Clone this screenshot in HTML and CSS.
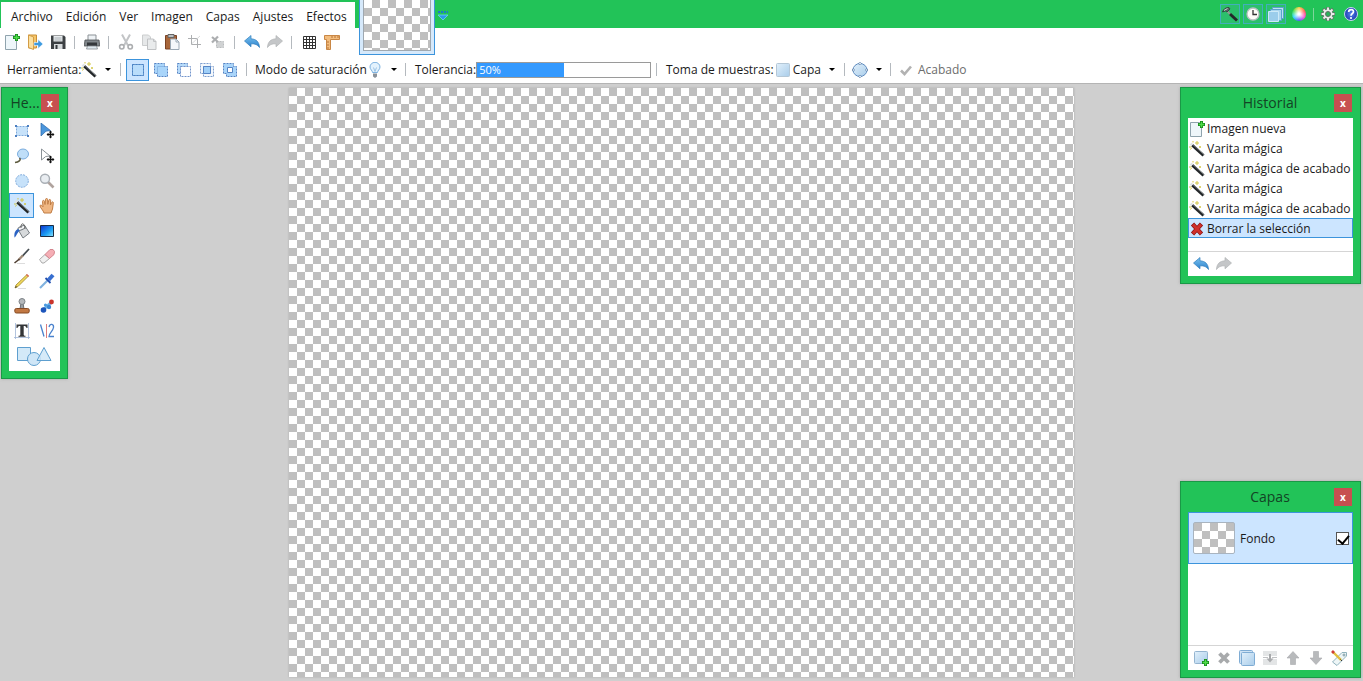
FILE: index.html
```html
<!DOCTYPE html>
<html lang="es">
<head>
<meta charset="utf-8">
<title>Editor de imágenes</title>
<link rel="stylesheet" href="styles.css">
</head>
<body>
<svg class="defs" aria-hidden="true">
  <defs>
    <linearGradient id="g-blue" x1="0" y1="0" x2="1" y2="1"><stop offset="0" stop-color="#e2f0fb"/><stop offset="1" stop-color="#a9cdea"/></linearGradient>
    <linearGradient id="g-arrow" x1="0" y1="0" x2="0" y2="1"><stop offset="0" stop-color="#7cc4f0"/><stop offset="1" stop-color="#2a80cc"/></linearGradient>
    <linearGradient id="g-fade" x1="0" y1="0" x2="1" y2="1"><stop offset="0" stop-color="#0b2fd0"/><stop offset=".6" stop-color="#1da0f4"/><stop offset="1" stop-color="#8fe6ff"/></linearGradient>
    <radialGradient id="g-help"><stop offset="0" stop-color="#5b86ee"/><stop offset="1" stop-color="#1b3bb0"/></radialGradient>
  </defs>
  <symbol id="new" viewBox="0 0 16 16"><path d="M1.500 1.500h9l2 3v11h-11z" fill="#eef6fa" stroke="#8fa3ad"/><path d="M12.500 0v7M9 3.500h7" stroke="#178a1c" stroke-width="3"/><path d="M12.500 .8v5.400M9.800 3.500h5.400" stroke="#4fdc4a" stroke-width="1.400"/></symbol>
  <symbol id="open" viewBox="0 0 16 16"><path d="M1.500 1h8v13h-8z" fill="#f5c66b" stroke="#c98f35"/><path d="M1.500 1l5 2v12.500l-5-2z" fill="#fbe0a0" stroke="#d39c45"/><path d="M7 8.500h4V5.500l5 4.500-5 4.500v-3H7z" fill="#3d9be0" stroke="#eef7ff" stroke-width=".6"/></symbol>
  <symbol id="save" viewBox="0 0 16 16"><path d="M1 1.500h13l1.500 1.500v12H1z" fill="#3c4043"/><path d="M3.500 2h9v5.500h-9z" fill="#e9edef"/><path d="M4.500 4h7M4.500 6h7" stroke="#a9b0b4"/><path d="M4 10h8.500v5H4z" fill="#d6dadc"/><path d="M5.500 11h2v4h-2z" fill="#33373a"/></symbol>
  <symbol id="print" viewBox="0 0 16 16"><path d="M4 1h8v6H4z" fill="#eef2f5" stroke="#8b9196"/><path d="M1 6h14l.8 6H.2z" fill="#80868a" stroke="#4c5053" stroke-width=".8"/><path d="M3 8.500h10V12H3z" fill="#34383b"/><path d="M3.500 12h9l1 3h-11z" fill="#dfe9ef" stroke="#858c90" stroke-width=".8"/></symbol>
  <symbol id="cut" viewBox="0 0 16 16"><path d="M4 .5l6 11M12 .5l-6 11" stroke="#c2c4c6" stroke-width="2" fill="none"/><circle cx="3.800" cy="12.800" r="2.200" fill="none" stroke="#acaeb0" stroke-width="1.600"/><circle cx="12.200" cy="12.800" r="2.200" fill="none" stroke="#acaeb0" stroke-width="1.600"/></symbol>
  <symbol id="copy" viewBox="0 0 16 16"><path d="M1.500 1h6l2 2v8.500h-8z" fill="#e6e8e9" stroke="#cbcdce"/><path d="M6.500 5h6l2.500 2.500v8H6.500z" fill="#e9ebec" stroke="#c0c2c4"/><path d="M12.500 5v2.500H15" fill="none" stroke="#c0c2c4"/></symbol>
  <symbol id="paste" viewBox="0 0 16 16"><path d="M1.500 1.500h11V15h-11z" fill="#a8663a" stroke="#7a4324"/><path d="M4 .5h6v3H4z" fill="#b9bdc0" stroke="#666"/><path d="M6.500 5h5.500l3 3v7.500H6.500z" fill="#f4f8fb" stroke="#9aa9b5"/><path d="M12 5v3h3" fill="none" stroke="#9aa9b5"/></symbol>
  <symbol id="crop" viewBox="0 0 16 16"><path d="M4.500 1v9.500H14M1 4.500h9.500V14" fill="none" stroke="#adafb1"/><path d="M5 9.500L13 2" stroke="#d8dadb"/></symbol>
  <symbol id="desel" viewBox="0 0 16 16"><path d="M6.500 7.500h7v6h-7z" fill="#d0d2d3" stroke="#b9bbbd" stroke-dasharray="2 1"/><path d="M2 3l6 5M8 2.500l-6 6" stroke="#acaeb0" stroke-width="2.200"/></symbol>
  <symbol id="undo" viewBox="0 0 16 16"><path d="M.5 7L7 1.500v3.300c5 .2 8.300 3 8.500 8.700-2-3-4.500-3.800-8.500-3.700v3z" fill="url(#g-arrow)" stroke="#2f7cbc" stroke-width=".7"/></symbol>
  <symbol id="redo" viewBox="0 0 16 16"><path d="M15.500 7L9 1.500v3.300C4 5 .7 7.800.5 13.500c2-3 4.500-3.800 8.500-3.700v3z" fill="#c4c6c8" stroke="#b0b3b5" stroke-width=".7"/></symbol>
  <symbol id="grid" viewBox="0 0 16 16"><path d="M2.500 2.500h12v12h-12zM5.500 2.500v12M8.500 2.500v12M11.500 2.500v12M2.500 5.500h12M2.500 8.500h12M2.500 11.500h12" fill="#fff" stroke="#333"/></symbol>
  <symbol id="ruler" viewBox="0 0 16 16"><path d="M.5 1.500h15v4h-9v10h-4V5.500h-2z" fill="#f3bd7d" stroke="#c98745"/><path d="M8 2v2M11 2v2M14 2v2M3 8h2M3 11h2M3 14h2" stroke="#b8753a"/></symbol>
  <symbol id="wand" viewBox="0 0 16 16"><path d="M3 4l11.500 10.500" stroke="#222628" stroke-width="3"/><path d="M3.600 3.300l11.500 10.500" stroke="#8c9296" stroke-width=".8"/><path d="M1.500 2.700l1.800 1.600" stroke="#dfe4e6" stroke-width="2.600"/><path d="M8 0v4M6 2h4M11 5v2M10 6h2M4 0v1.500M0 6h2.500M1.500 8.500l1-1.500" stroke="#d2c645"/></symbol>
  <symbol id="sel-replace" viewBox="0 0 16 16"><path d="M2.500 2.500h11v11h-11z" fill="#b9ddfb" stroke="#76a3d6"/><path d="M2.500 2.500h11v11h-11z" fill="none" stroke="#4a82c4" stroke-dasharray="2 1"/></symbol>
  <symbol id="sel-add" viewBox="0 0 16 16"><path d="M1.500 1.500h10v3h3v10h-10v-3h-3z" fill="#a9d5fa" stroke="#5684c4" stroke-dasharray="2 1"/><path d="M4.500 11V4.500H11" fill="none" stroke="#8ab8e6"/></symbol>
  <symbol id="sel-sub" viewBox="0 0 16 16"><path d="M1.500 1.500h10v3h-7v7h-3z" fill="#b5dafa" stroke="#5684c4" stroke-dasharray="2 1"/><path d="M4.500 4.500h10v10h-10z" fill="#fff" stroke="#7295cc" stroke-dasharray="2 1"/></symbol>
  <symbol id="sel-int" viewBox="0 0 16 16"><path d="M1.500 1.500h10v10h-10zM4.500 4.500h10v10h-10z" fill="#f4f8fc" stroke="#7f9fcf" stroke-dasharray="2 1"/><path d="M4.500 4.500h7v7h-7z" fill="#9fcff8" stroke="#5684c4"/></symbol>
  <symbol id="sel-xor" viewBox="0 0 16 16"><path d="M1.500 1.500h10v3h3v10h-10v-3h-3z" fill="#a9d5fa" stroke="#5684c4" stroke-dasharray="2 1"/><path d="M5.500 5.500h5v5h-5z" fill="#fff" stroke="#5684c4"/></symbol>
  <symbol id="bulb" viewBox="0 0 16 16"><path d="M5.500 10.500c0-2-2.500-3-2.500-5.500a5 4.700 0 0 1 10 0c0 2.500-2.500 3.500-2.500 5.500z" fill="#e3f2fd" stroke="#7db2e0"/><path d="M6.500 5.500l1.500 4 1.500-4" fill="none" stroke="#9cc3e5"/><path d="M6 11.500h4v3L8 16l-2-1.500z" fill="#8a9199"/></symbol>
  <symbol id="layer" viewBox="0 0 16 16"><rect x="1.500" y="1.500" width="13" height="13" rx="1" fill="url(#g-blue)" stroke="#b4c7d6"/></symbol>
  <symbol id="ellipse" viewBox="0 0 16 16"><ellipse cx="8" cy="8" rx="7" ry="6.500" fill="url(#g-blue)" stroke="#5f8cc0"/><path d="M8 .2l1.300 1.300L8 2.800 6.700 1.500zM8 13.200l1.300 1.300L8 15.800l-1.300-1.300zM1.300 6.700L2.600 8 1.300 9.300 0 8zM14.700 6.700L16 8l-1.300 1.300L13.400 8z" fill="#fff" stroke="#47709f" stroke-width=".7"/></symbol>
  <symbol id="check" viewBox="0 0 16 16"><path d="M3 8.500l3.500 3.500L13 4.500" fill="none" stroke="#b2b2b2" stroke-width="2.600"/></symbol>
  <symbol id="hammer" viewBox="0 0 16 16"><path d="M5 5l3.500 3.500" stroke="#8f9a90" stroke-width="2"/><path d="M8 8l7 6.500" stroke="#23282a" stroke-width="3"/><path d="M.5 6C1.500 3 3.500 1.500 7 1.500L8 3 5 6 3.500 5z" fill="#5b6568" stroke="#2b3133" stroke-width=".7"/><path d="M2 4.500L5.500 2.500" stroke="#ccd5d7"/></symbol>
  <symbol id="clock" viewBox="0 0 16 16"><circle cx="8" cy="8" r="6" fill="#fcfcf8" stroke="#b9bfc2" stroke-width="1.300"/><path d="M8 4v4.500h4" fill="none" stroke="#333" stroke-width="1.300"/></symbol>
  <symbol id="layers" viewBox="0 0 16 16"><path d="M4.500 1.500h11v11h-11z" fill="#bfe0f2" stroke="#5aa3cb"/><path d="M2.500 3.500h11v11h-11z" fill="#a9d5ee" stroke="#5aa3cb"/><path d="M.5 5.500h10v10H.5z" fill="#9bcdeb" stroke="#cdeaf8"/></symbol>
  <symbol id="gear" viewBox="0 0 16 16"><path d="M8 1v14M1 8h14M3 3l10 10M13 3L3 13" stroke="#666e68" stroke-width="3.400"/><path d="M8 1.600v12.800M1.600 8h12.800M3.500 3.500l9 9M12.500 3.500l-9 9" stroke="#e8ece9" stroke-width="2"/><circle cx="8" cy="8" r="4.500" fill="#e8ece9"/><circle cx="8" cy="8" r="2.500" fill="#27b35a" stroke="#666e68"/></symbol>
  <symbol id="help" viewBox="0 0 16 16"><circle cx="8" cy="8" r="6.500" fill="url(#g-help)" stroke="#c9d4f4"/><path d="M5.700 6c0-3.300 4.800-3 4.800-.3C10.500 7.500 8 7.600 8 9.700" fill="none" stroke="#fff" stroke-width="1.700"/><circle cx="8" cy="12" r="1.100" fill="#fff"/></symbol>
  <symbol id="rectsel" viewBox="0 0 16 16"><path d="M2.500 3.500h11v9h-11z" fill="#c7e2fa" stroke="#7fabdc" stroke-dasharray="2 1"/><path d="M1 2h2v2H1zM13 2h2v2h-2zM1 12h2v2H1zM13 12h2v2h-2z" fill="#4c7fc0"/></symbol>
  <symbol id="move" viewBox="0 0 16 16"><path d="M2 0l9.500 7.500-4.500.7L2 13z" fill="#4b96dc" stroke="#2d69a8" stroke-width=".7"/><path d="M11.500 8v7M8 11.500h7" stroke="#111" stroke-width="1.400"/><path d="M11.500 7.500l1.500 2h-3zM11.500 15.500l1.500-2h-3zM7.500 11.500l2-1.500v3zM15.500 11.500l-2-1.500v3z" fill="#111"/></symbol>
  <symbol id="movesel" viewBox="0 0 16 16"><path d="M2.500 1l8.500 7-4.300.5L2.500 12z" fill="#fff" stroke="#8a9196"/><path d="M11.500 8v7M8 11.500h7" stroke="#111" stroke-width="1.400"/><path d="M11.500 7.500l1.500 2h-3zM11.500 15.500l1.500-2h-3zM7.500 11.500l2-1.500v3zM15.500 11.500l-2-1.500v3z" fill="#111"/></symbol>
  <symbol id="lasso" viewBox="0 0 16 16"><ellipse cx="9" cy="6" rx="5.500" ry="5" fill="#bfdef8" stroke="#7badde"/><path d="M5.500 10c2 2-1 4-4.500 4.500" fill="none" stroke="#5d5a3e" stroke-width="1.600"/></symbol>
  <symbol id="ellsel" viewBox="0 0 16 16"><circle cx="8" cy="8" r="6.300" fill="#c7e2fa" stroke="#7fabdc" stroke-dasharray="2 1"/></symbol>
  <symbol id="zoom" viewBox="0 0 16 16"><path d="M9 9l5.500 5.500" stroke="#b0a39e" stroke-width="2.600"/><circle cx="6" cy="5.800" r="4.500" fill="#e9edf1" stroke="#a9afb5" stroke-width="1.400"/></symbol>
  <symbol id="hand" viewBox="0 0 16 16"><path d="M5 15C4.500 12.500 1 9.500 1 8s1.800-1 3 .8L3.500 3.500c0-1.500 1.800-1.500 2 0l.5 3 .5-5c.2-1.400 2-1.400 2.100 0l.2 4.800 1-4c.4-1.400 2-1 1.900.4l-.3 4.300 1.200-2.500c.7-1.200 2-.6 1.700.7L13.500 11 12 15z" fill="#efb682" stroke="#c07c44"/></symbol>
  <symbol id="bucket" viewBox="0 0 16 16"><path d="M4 6.500l7-3.500 4.500 7-6.500 5z" fill="#d7dadc" stroke="#777d82"/><ellipse cx="7.500" cy="5" rx="4" ry="1.700" transform="rotate(-27 7.500 5)" fill="#f5f6f7" stroke="#777d82"/><path d="M7 5c-.5-6 4-5.500 4 1" fill="none" stroke="#666"/><path d="M4.500 6C1 7 0 10 .5 14.500 2 14 3 10 5.500 8z" fill="#2b63c4"/></symbol>
  <symbol id="gradient" viewBox="0 0 16 16"><path d="M1.500 2.500h13v11h-13z" fill="url(#g-fade)" stroke="#1b2c42"/></symbol>
  <symbol id="brush" viewBox="0 0 16 16"><path d="M15 1L8 8.500" stroke="#444b50" stroke-width="1.800"/><path d="M8.800 7.500L4.500 12" stroke="#a08c78" stroke-width="2.400"/><path d="M5.500 11L.5 15" stroke="#4e3e31" stroke-width="1.600"/><path d="M3 15.500h8" stroke="#ddd"/></symbol>
  <symbol id="eraser" viewBox="0 0 16 16"><path d="M.5 11.500L6 6.500l4.500 4L5 15H3z" fill="#f0f0f0" stroke="#aaa"/><path d="M6 6.500L11 1.500h3l1.500 2-.5 3-4.500 4z" fill="#f5aeb5" stroke="#d4848d"/></symbol>
  <symbol id="pencil" viewBox="0 0 16 16"><path d="M13 1.500l1.500 1.500L4 13.500 1 15l1-3z" fill="#f0d95c" stroke="#9e852a" stroke-width=".8"/><path d="M12 2l1-1 2 2-1 1z" fill="#df6960"/><path d="M1 15l2-1-1-1z" fill="#333"/><path d="M4 15.500h8" stroke="#ddd"/></symbol>
  <symbol id="picker" viewBox="0 0 16 16"><path d="M9 7L3.500 12.500 1 15" fill="none" stroke="#80b2df" stroke-width="2.200"/><path d="M6.500 5l5 5" stroke="#244fae" stroke-width="1.800"/><path d="M9.500 7L14 2" stroke="#376fd0" stroke-width="4"/></symbol>
  <symbol id="stamp" viewBox="0 0 16 16"><path d="M7 5h2l1 6H6z" fill="#9ba0a4" stroke="#6b7074"/><circle cx="8" cy="3.500" r="3" fill="#b4b8bb" stroke="#7d8286"/><rect x=".8" y="10.500" width="14.400" height="4.500" rx="1.500" fill="#c27843" stroke="#854a23"/></symbol>
  <symbol id="recolor" viewBox="0 0 16 16"><path d="M4 12L12.500 4" stroke="#6db3e8" stroke-width="3"/><circle cx="4.500" cy="12" r="2.800" fill="#1d55bb"/><circle cx="12.500" cy="4" r="2.400" fill="#c9342c"/><circle cx="10" cy="9" r="2.200" fill="#3a86d4"/><circle cx="6.500" cy="7" r="1.600" fill="#4a9ae0"/></symbol>
  <symbol id="text" viewBox="0 0 16 16"><path d="M1.500 0v16M14.500 0v16M0 14.500h16" stroke="#9fb5d6" stroke-width=".8"/><path d="M2.500 1.500h11v3.500h-1c-.3-1.500-1-2-2.800-2v8.500c0 1 .3 1.200 1.800 1.300v.9h-7v-.9c1.500-.1 1.800-.3 1.800-1.300V3C4.500 3 3.800 3.500 3.500 5h-1z" fill="#343638"/></symbol>
  <symbol id="line" viewBox="0 0 16 16"><path d="M1.500 1.500l3.500 12" stroke="#4a82cd" stroke-width="1.300"/><path d="M7.500 1v14" stroke="#dc7c7c"/><path d="M10 4c1-4 5-3 4.500.5C14 8 10 10 10 13.500h5" fill="none" stroke="#4a82cd" stroke-width="1.300"/></symbol>
  <symbol id="shapes" viewBox="0 0 36 20"><path d="M1.500 1.500h13v13h-13z" fill="#d3e9f8" stroke="#5e9fcf"/><circle cx="18" cy="13" r="6.500" fill="#cfe6f7" stroke="#5e9fcf"/><path d="M28 1.500l7 13H21z" fill="#cfe6f7" fill-opacity=".85" stroke="#5e9fcf"/></symbol>
  <symbol id="delete" viewBox="0 0 16 16"><path d="M3.500 3l9 10M12.500 3l-9 10" stroke="#8d1414" stroke-width="4.400"/><path d="M4 3.500l8 9M12 3.500l-8 9" stroke="#cf302c" stroke-width="3"/></symbol>
  <symbol id="layer-add" viewBox="0 0 16 16"><rect x="1.500" y="1.500" width="13" height="12" rx="1" fill="url(#g-blue)" stroke="#94b4d0"/><path d="M12.500 9v7M9 12.500h7" stroke="#178a1c" stroke-width="3"/><path d="M12.500 9.800v5.400M9.800 12.500h5.400" stroke="#4fdc4a" stroke-width="1.400"/></symbol>
  <symbol id="layer-del" viewBox="0 0 16 16"><path d="M3.500 3.500l9 9M12.500 3.500l-9 9" stroke="#a8aaac" stroke-width="3.800"/></symbol>
  <symbol id="layer-dup" viewBox="0 0 16 16"><rect x=".5" y=".5" width="13" height="13" rx="1" fill="#cfe3f4" stroke="#7facd4"/><rect x="2.500" y="2.500" width="13" height="13" rx="1" fill="url(#g-blue)" stroke="#7facd4"/></symbol>
  <symbol id="layer-merge" viewBox="0 0 16 16"><path d="M1 1h14v5H1zM1 9h14v6H1z" fill="#e3e5e6"/><path d="M1 7.500h5M10 7.500h5" stroke="#c0c2c4"/><path d="M8 4v6" stroke="#a6a8aa" stroke-width="2"/><path d="M4.500 8.500h7L8 12.500z" fill="#a8aaac"/></symbol>
  <symbol id="up" viewBox="0 0 16 16"><path d="M8 1.500l6 6.500h-3.500v6.500h-5V8H2z" fill="#b8babc" stroke="#a8aaac" stroke-width=".6"/></symbol>
  <symbol id="down" viewBox="0 0 16 16"><path d="M8 14.500L2 8h3.500V1.500h5V8H14z" fill="#b8babc" stroke="#a8aaac" stroke-width=".6"/></symbol>
  <symbol id="props" viewBox="0 0 16 16"><path d="M1.500 12L11 2.500h4.500V6L6 15.500z" fill="#eef6f7" stroke="#8fb2bd"/><circle cx="13" cy="5" r="1" fill="#fff" stroke="#7898a2"/><path d="M2 2l8 8" stroke="#e0bd3c" stroke-width="2.400"/><path d="M1 1l2 2" stroke="#cf3d35" stroke-width="2.600"/><path d="M9.500 9.500l1.500 1.500" stroke="#333"/></symbol>
  <symbol id="overflow" viewBox="0 0 12 12"><path d="M1 3h10" stroke="#1d78c8" stroke-width="2" stroke-dasharray="2 1"/><path d="M1 6h10L6 11z" fill="#2a9be8" stroke="#6fd0f4" stroke-width=".8"/></symbol>
</svg>

<header class="topbar">
  <nav class="menu" aria-label="Menú">
    <button>Archivo</button><button>Edición</button><button>Ver</button><button>Imagen</button><button>Capas</button><button>Ajustes</button><button>Efectos</button>
  </nav>
  <div class="doc-slot"><button class="doc-tab" aria-label="Imagen sin título"><span class="checker doc-thumb"></span></button></div>
  <button class="overflow" aria-label="Más imágenes"><svg><use href="#overflow"/></svg></button>
  <div class="utilities">
    <button class="util on" aria-label="Herramientas"><svg class="icon"><use href="#hammer"/></svg></button>
    <button class="util on" aria-label="Historial"><svg class="icon"><use href="#clock"/></svg></button>
    <button class="util on" aria-label="Capas"><svg class="icon"><use href="#layers"/></svg></button>
    <button class="util" aria-label="Colores"><span class="wheel"></span></button>
    <span class="sep short"></span>
    <button class="util" aria-label="Configuración"><svg class="icon"><use href="#gear"/></svg></button>
    <button class="util" aria-label="Ayuda"><svg class="icon"><use href="#help"/></svg></button>
  </div>
</header>

<div class="toolbar main-tools" role="toolbar" aria-label="Acciones">
  <button class="tb" aria-label="Nuevo"><svg class="icon"><use href="#new"/></svg></button>
  <button class="tb" aria-label="Abrir"><svg class="icon"><use href="#open"/></svg></button>
  <button class="tb" aria-label="Guardar"><svg class="icon"><use href="#save"/></svg></button>
  <span class="sep"></span>
  <button class="tb" aria-label="Imprimir"><svg class="icon"><use href="#print"/></svg></button>
  <span class="sep"></span>
  <button class="tb" aria-label="Cortar"><svg class="icon"><use href="#cut"/></svg></button>
  <button class="tb" aria-label="Copiar"><svg class="icon"><use href="#copy"/></svg></button>
  <button class="tb" aria-label="Pegar"><svg class="icon"><use href="#paste"/></svg></button>
  <button class="tb" aria-label="Recortar"><svg class="icon"><use href="#crop"/></svg></button>
  <button class="tb" aria-label="Anular selección"><svg class="icon"><use href="#desel"/></svg></button>
  <span class="sep"></span>
  <button class="tb" aria-label="Deshacer"><svg class="icon"><use href="#undo"/></svg></button>
  <button class="tb" aria-label="Rehacer"><svg class="icon"><use href="#redo"/></svg></button>
  <span class="sep"></span>
  <button class="tb" aria-label="Cuadrícula"><svg class="icon"><use href="#grid"/></svg></button>
  <button class="tb" aria-label="Reglas"><svg class="icon"><use href="#ruler"/></svg></button>
</div>

<div class="toolbar options" role="toolbar" aria-label="Opciones de herramienta">
  <div class="group g-tool"><span class="label">Herramienta:</span><button class="drop" aria-label="Varita mágica"><svg class="icon"><use href="#wand"/></svg><i class="caret"></i></button></div>
  <span class="sep"></span>
  <button class="tb active" aria-label="Reemplazar"><svg class="icon"><use href="#sel-replace"/></svg></button>
  <button class="tb" aria-label="Agregar"><svg class="icon"><use href="#sel-add"/></svg></button>
  <button class="tb" aria-label="Restar"><svg class="icon"><use href="#sel-sub"/></svg></button>
  <button class="tb" aria-label="Intersecar"><svg class="icon"><use href="#sel-int"/></svg></button>
  <button class="tb" aria-label="Invertir"><svg class="icon"><use href="#sel-xor"/></svg></button>
  <span class="sep"></span>
  <div class="group g-flood"><span class="label">Modo de saturación</span><button class="drop" aria-label="Modo"><svg class="icon"><use href="#bulb"/></svg><i class="caret"></i></button></div>
  <span class="sep"></span>
  <div class="group g-tol"><span class="label">Tolerancia:</span><div class="meter" role="meter" aria-label="Tolerancia" aria-valuenow="50" aria-valuemin="0" aria-valuemax="100"><div class="meter-fill" style="width:50%">50%</div></div></div>
  <span class="sep"></span>
  <div class="group g-sample"><span class="label">Toma de muestras:</span><button class="drop"><svg class="icon"><use href="#layer"/></svg><span class="drop-text">Capa</span><i class="caret"></i></button></div>
  <span class="sep"></span>
  <div class="group g-edge"><button class="drop" aria-label="Borde de selección"><svg class="icon"><use href="#ellipse"/></svg><i class="caret"></i></button></div>
  <span class="sep"></span>
  <button class="finish" disabled><svg class="icon"><use href="#check"/></svg>Acabado</button>
</div>

<main class="workspace">
  <div class="canvas checker"></div>

  <section class="window tools-win">
    <header class="title"><h2>He...</h2><button class="close" aria-label="Cerrar">x</button></header>
    <div class="pane tool-grid">
      <button class="tool" aria-label="Rectángulo"><svg class="icon"><use href="#rectsel"/></svg></button>
      <button class="tool" aria-label="Mover píxeles"><svg class="icon"><use href="#move"/></svg></button>
      <button class="tool" aria-label="Lazo"><svg class="icon"><use href="#lasso"/></svg></button>
      <button class="tool" aria-label="Mover selección"><svg class="icon"><use href="#movesel"/></svg></button>
      <button class="tool" aria-label="Elipse"><svg class="icon"><use href="#ellsel"/></svg></button>
      <button class="tool" aria-label="Zoom"><svg class="icon"><use href="#zoom"/></svg></button>
      <button class="tool active" aria-label="Varita mágica"><svg class="icon"><use href="#wand"/></svg></button>
      <button class="tool" aria-label="Panorámica"><svg class="icon"><use href="#hand"/></svg></button>
      <button class="tool" aria-label="Relleno"><svg class="icon"><use href="#bucket"/></svg></button>
      <button class="tool" aria-label="Degradado"><svg class="icon"><use href="#gradient"/></svg></button>
      <button class="tool" aria-label="Pincel"><svg class="icon"><use href="#brush"/></svg></button>
      <button class="tool" aria-label="Borrador"><svg class="icon"><use href="#eraser"/></svg></button>
      <button class="tool" aria-label="Lápiz"><svg class="icon"><use href="#pencil"/></svg></button>
      <button class="tool" aria-label="Selector de color"><svg class="icon"><use href="#picker"/></svg></button>
      <button class="tool" aria-label="Clonar"><svg class="icon"><use href="#stamp"/></svg></button>
      <button class="tool" aria-label="Volver a colorear"><svg class="icon"><use href="#recolor"/></svg></button>
      <button class="tool" aria-label="Texto"><svg class="icon"><use href="#text"/></svg></button>
      <button class="tool" aria-label="Línea o curva"><svg class="icon"><use href="#line"/></svg></button>
      <button class="tool wide" aria-label="Formas"><svg class="icon-wide"><use href="#shapes"/></svg></button>
    </div>
  </section>

  <section class="window history-win">
    <header class="title"><h2>Historial</h2><button class="close" aria-label="Cerrar">x</button></header>
    <div class="pane">
      <ul class="history">
        <li><svg class="icon"><use href="#new"/></svg>Imagen nueva</li>
        <li><svg class="icon"><use href="#wand"/></svg>Varita mágica</li>
        <li><svg class="icon"><use href="#wand"/></svg>Varita mágica de acabado</li>
        <li><svg class="icon"><use href="#wand"/></svg>Varita mágica</li>
        <li><svg class="icon"><use href="#wand"/></svg>Varita mágica de acabado</li>
        <li class="current"><svg class="icon"><use href="#delete"/></svg>Borrar la selección</li>
      </ul>
      <div class="pane-bar">
        <button class="tb" aria-label="Deshacer"><svg class="icon"><use href="#undo"/></svg></button>
        <button class="tb" aria-label="Rehacer"><svg class="icon"><use href="#redo"/></svg></button>
      </div>
    </div>
  </section>

  <section class="window layers-win">
    <header class="title"><h2>Capas</h2><button class="close" aria-label="Cerrar">x</button></header>
    <div class="pane">
      <div class="layer-list">
        <div class="layer-row"><span class="checker layer-thumb"></span><label for="fondo">Fondo</label><input type="checkbox" id="fondo" checked></div>
      </div>
      <div class="pane-bar">
        <button class="tb" aria-label="Agregar capa"><svg class="icon"><use href="#layer-add"/></svg></button>
        <button class="tb" aria-label="Eliminar capa"><svg class="icon"><use href="#layer-del"/></svg></button>
        <button class="tb" aria-label="Duplicar capa"><svg class="icon"><use href="#layer-dup"/></svg></button>
        <button class="tb" aria-label="Combinar capa"><svg class="icon"><use href="#layer-merge"/></svg></button>
        <button class="tb" aria-label="Subir capa"><svg class="icon"><use href="#up"/></svg></button>
        <button class="tb" aria-label="Bajar capa"><svg class="icon"><use href="#down"/></svg></button>
        <button class="tb" aria-label="Propiedades"><svg class="icon"><use href="#props"/></svg></button>
      </div>
    </div>
  </section>
</main>
</body>
</html>
```
FILE: styles.css
```css
:root {
  --green: #22c358;
  --green-dark: #1a9846;
  --blue: #3c94dc;
  --select: #cce5ff;
}

* { box-sizing: border-box; }

body {
  margin: 0;
  height: 100vh;
  display: flex;
  flex-direction: column;
  overflow: hidden;
  background: #fff;
  color: #1a1a1a;
  font: 12px/16px "Open Sans", "Noto Sans", sans-serif;
}

button {
  margin: 0;
  padding: 0;
  border: 0;
  background: none;
  color: inherit;
  font: inherit;
}

.defs { position: absolute; width: 0; height: 0; }
.icon { display: block; flex: none; width: 16px; height: 16px; }

.checker {
  background: #fff repeating-conic-gradient(#fff 0 25%, #bfbfbf 0 50%) 0 0 / 16px 16px;
}

.topbar {
  flex: none;
  display: flex;
  height: 28px;
  background: var(--green);
}

.menu {
  display: flex;
  gap: 13px;
  margin: 2px 0 0 1px;
  padding: 4px 8px 0 10px;
  background: #fff;
}

.doc-slot { position: relative; width: 76px; margin-left: 4px; }

.doc-tab {
  position: absolute;
  inset: 0 0 auto;
  z-index: 1;
  height: 55px;
  padding: 0 3px 3px;
  border: 1px solid var(--blue);
  border-top: 0;
  background: #d6e9fb;
}

.doc-thumb {
  display: block;
  height: 51px;
  border: 1px solid #9fa8b0;
  border-top: 0;
  background-position: 8px 0;
}

.overflow { align-self: flex-start; margin: 9px 0 0 2px; }
.overflow svg { display: block; width: 12px; height: 12px; }

.utilities {
  display: flex;
  align-items: center;
  gap: 3px;
  margin-left: auto;
  padding-right: 2px;
}

.util {
  display: grid;
  place-content: center;
  width: 20px;
  height: 20px;
}

.util.on { border: 1px solid #42aebb; background: #2bc06c; }

.wheel {
  width: 14px;
  height: 14px;
  border-radius: 50%;
  background: radial-gradient(#fff 10%, transparent 65%), conic-gradient(#ffd04a, #ff5a5a, #ff4fd8, #5a5aff, #35d9ff, #4fe04f, #ffd04a);
}

.toolbar { flex: none; display: flex; align-items: center; }
.main-tools { height: 28px; }
.options { height: 28px; padding-left: 7px; border-bottom: 1px solid #b4b4b4; }

.tb {
  flex: none;
  display: grid;
  place-content: center;
  width: 23px;
  height: 22px;
}

.tb.active { border: 1px solid var(--blue); background: var(--select); }

.sep {
  flex: none;
  width: 1px;
  height: 13px;
  margin: 0 5px;
  background: #b4b9be;
}

.sep.short { margin: 0 1px; background: #7ed69b; }

.group { display: flex; align-items: center; justify-content: space-between; }
.label { white-space: nowrap; }
.drop { display: flex; align-items: center; }
.drop-text { margin-left: 2px; }

.caret {
  margin-left: 8px;
  border: 3px solid transparent;
  border-top-color: #000;
  border-bottom: 0;
}

.g-tool { width: 108px; padding-right: 7px; }
.g-flood { width: 148px; padding: 0 3px; }
.g-tol { width: 240px; padding-left: 4px; }
.g-sample { width: 177px; padding: 0 4px; }
.g-edge { width: 35px; padding-left: 2px; }

.meter {
  width: 175px;
  height: 16px;
  border: 1px solid #9a9a9a;
  background: #fff;
}

.meter-fill {
  height: 14px;
  padding-left: 2px;
  background: #3399ff;
  color: #fff;
  font-size: 11px;
  line-height: 14px;
}

.finish { display: flex; align-items: center; gap: 4px; margin-left: 2px; color: #6d6d6d; }

.workspace {
  position: relative;
  flex: 1;
  min-height: 0;
  display: flex;
  justify-content: center;
  padding: 4px 0;
  background: #cfcfcf;
}

.canvas {
  aspect-ratio: 4 / 3;
  background-position: 0 0;
  box-shadow: 0 0 2px #aaa;
}

.window {
  position: absolute;
  display: flex;
  flex-direction: column;
  padding: 0 7px 7px;
  border: 1px solid var(--green-dark);
  background: var(--green);
  box-shadow: 0 0 3px #aaa;
}

.tools-win { top: 3px; left: 1px; width: 67px; }
.history-win { top: 3px; right: 2px; width: 181px; height: 197px; }
.layers-win { right: 2px; bottom: 3px; width: 181px; height: 197px; }

.title {
  flex: none;
  display: flex;
  align-items: center;
  height: 30px;
  padding-right: 1px;
}

.title h2 {
  flex: 1;
  margin: 0;
  padding-left: 18px;
  color: #134425;
  font-size: 14px;
  font-weight: 400;
  text-align: center;
}

.tools-win h2 { padding: 0; }

.close {
  width: 18px;
  height: 18px;
  background: #c75050;
  color: #fff;
  font-size: 10px;
  font-weight: 700;
  line-height: 16px;
}

.pane {
  flex: 1;
  display: flex;
  flex-direction: column;
  min-height: 0;
  background: #fff;
}

.tool-grid {
  display: grid;
  grid-template-columns: 25px 25px;
  grid-auto-rows: 25px;
  padding: 0 0 3px;
}

.tool { display: grid; place-content: center; }
.tool.active { border: 1px solid var(--blue); background: var(--select); }
.tool.wide { grid-column: span 2; }
.icon-wide { display: block; width: 36px; height: 20px; }

.history { flex: 1; margin: 0; padding: 0; list-style: none; }

.history li {
  display: flex;
  align-items: center;
  gap: 2px;
  height: 20px;
  padding: 1px 0 0;
  border: 1px solid transparent;
  white-space: nowrap;
}

.history .current { border-color: var(--blue); background: var(--select); }

.pane-bar {
  flex: none;
  display: flex;
  height: 25px;
  padding-left: 1px;
  align-items: center;
  border-top: 1px solid #d5d5d5;
}

.layer-list { flex: 1; }

.layer-row {
  display: flex;
  align-items: center;
  gap: 5px;
  height: 52px;
  padding: 0 3px 0 4px;
  border: 1px solid var(--blue);
  background: var(--select);
}

.layer-row label { flex: 1; padding-top: 1px; }

.layer-thumb {
  width: 42px;
  height: 32px;
  border: 1px solid #a9b4bf;
  border-radius: 2px;
}

.layer-row input {
  appearance: none;
  width: 13px;
  height: 13px;
  margin: 0;
  border: 1px solid #555;
  background: #fff;
}

.layer-row input:checked::before {
  content: "";
  display: block;
  width: 5px;
  height: 9px;
  margin: 0 0 0 3px;
  border: solid #000;
  border-width: 0 2px 2px 0;
  transform: rotate(40deg);
}
```
